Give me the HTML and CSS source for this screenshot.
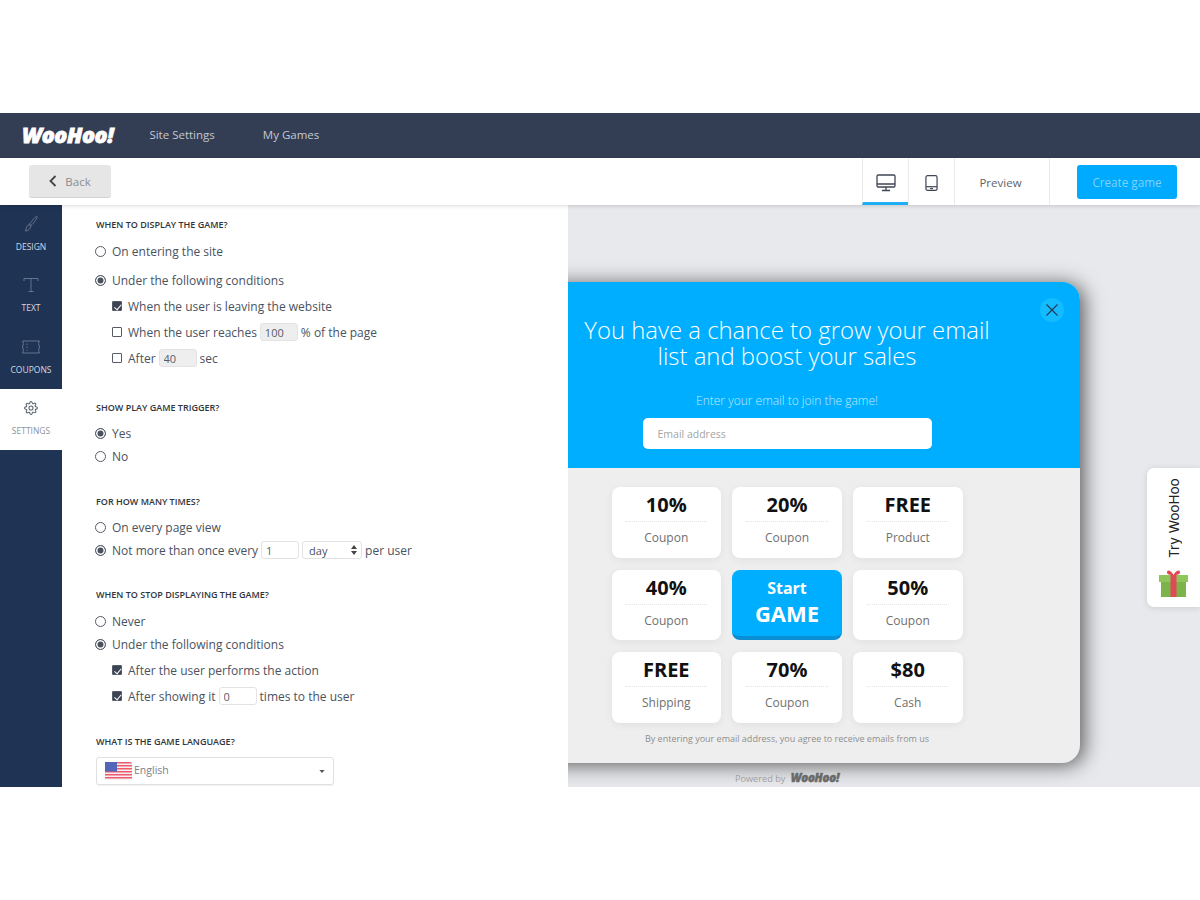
FILE: index.html
```html
<!DOCTYPE html>
<html lang="en">
<head>
    <meta charset="UTF-8">
    <meta name="viewport" content="width=device-width, initial-scale=1.0">
    <title>WooHoo - Game Settings</title>
    <link rel="stylesheet" href="styles.css">
</head>
<body>
    <div class="app">
        <nav class="navbar">
            <span class="logo">WooHoo!</span>
            <a class="nav-link">Site Settings</a>
            <a class="nav-link">My Games</a>
        </nav>

        <div class="toolbar">
            <button class="btn-back">
                <svg width="8" height="12" viewBox="0 0 8 12"><path d="M6.500 1 L1.500 6 L6.500 11" fill="none" stroke="#444" stroke-width="1.800"/></svg>
                Back
            </button>
            <div class="toolbar-right">
                <div class="device-tab active">
                    <svg width="20" height="18" viewBox="0 0 20 18" fill="none" stroke="#3f4653" stroke-width="1.300"><rect x="1" y="1" width="18" height="12" rx="1.200"/><path d="M1 10 H19 M10 13 V16.500 M6 16.500 H14"/></svg>
                </div>
                <div class="device-tab">
                    <svg width="13" height="18" viewBox="0 0 14 18" fill="none" stroke="#3f4653" stroke-width="1.300"><rect x="1" y="1" width="12" height="16" rx="1.800"/><path d="M1 13 H13"/><path d="M5.500 15 H8.500" stroke-width="1.400"/></svg>
                </div>
                <div class="preview-tab">Preview</div>
                <div class="create-wrap"><button class="btn-create">Create game</button></div>
            </div>
        </div>

        <div class="workspace">
            <aside class="sidebar">
                <div class="side-item">
                    <svg width="16" height="18" viewBox="0 0 16 18" fill="none" stroke="#66758f" stroke-width="1"><path d="M14 1.500 C15 2.500 11 8 8 10.500 L6.500 9 C9 6 13 .5 14 1.500 Z"/><path d="M6 9.500 L7.800 11.200 C7.500 14 5 16 2.200 16 C3.500 14.500 3 11 6 9.500 Z"/></svg>
                    <span>Design</span>
                </div>
                <div class="side-item">
                    <svg width="16" height="16" viewBox="0 0 16 16" fill="none" stroke="#66758f" stroke-width="1"><path d="M1 4 V1.500 H15 V4 M8 1.500 V14.500 M5.500 14.500 H10.500"/></svg>
                    <span>Text</span>
                </div>
                <div class="side-item">
                    <svg width="20" height="15" viewBox="0 0 20 15" fill="none" stroke="#66758f" stroke-width="1"><path d="M1.500 1.500 H18.500 L17.500 4 L18.500 7.500 L17.500 11 L18.500 13.500 H1.500 L2.500 11 L1.500 7.500 L2.500 4 Z"/><path d="M6 4 V11" stroke-dasharray="1.500 1.500"/></svg>
                    <span>Coupons</span>
                </div>
                <div class="side-item active">
                    <svg width="14" height="14" viewBox="0 0 24 24" fill="none" stroke="#5a6270" stroke-width="1.800"><circle cx="12" cy="12" r="3.500"/><path d="M19.400 15a1.650 1.650 0 0 0 .33 1.820l.06.06a2 2 0 1 1-2.830 2.830l-.06-.06a1.650 1.650 0 0 0-2.820 1.170V21a2 2 0 1 1-4 0v-.09a1.650 1.650 0 0 0-2.820-1.170l-.06.06a2 2 0 1 1-2.830-2.830l.06-.06a1.650 1.650 0 0 0-1.170-2.820H3a2 2 0 1 1 0-4h.09a1.650 1.650 0 0 0 1.170-2.820l-.06-.06a2 2 0 1 1 2.830-2.830l.06.06a1.650 1.650 0 0 0 2.820-1.170V3a2 2 0 1 1 4 0v.09a1.650 1.650 0 0 0 2.820 1.170l.06-.06a2 2 0 1 1 2.830 2.830l-.06.06a1.650 1.650 0 0 0 1.170 2.820H21a2 2 0 1 1 0 4h-.09a1.650 1.650 0 0 0-1.510 1z"/></svg>
                    <span>Settings</span>
                </div>
            </aside>

            <main class="panel">
                <section class="section">
                    <h4>When to display the game?</h4>
                    <label class="row"><input type="radio" name="display">On entering the site</label>
                    <label class="row row-loose"><input type="radio" name="display" checked>Under the following conditions</label>
                    <label class="row row-sub"><input type="checkbox" checked>When the user is leaving the website</label>
                    <label class="row row-sub"><input type="checkbox">When the user reaches<input class="num num-grey" type="text" value="100">% of the page</label>
                    <label class="row row-sub"><input type="checkbox">After<input class="num num-grey" type="text" value="40">sec</label>
                </section>

                <section class="section section-wide">
                    <h4>Show play game trigger?</h4>
                    <label class="row"><input type="radio" name="trigger" checked>Yes</label>
                    <label class="row"><input type="radio" name="trigger">No</label>
                </section>

                <section class="section">
                    <h4>For how many times?</h4>
                    <label class="row"><input type="radio" name="times">On every page view</label>
                    <label class="row"><input type="radio" name="times" checked>Not more than once every<input class="num" type="text" value="1"><span class="mini-select"><span>day</span><svg width="6" height="10" viewBox="0 0 6 10" fill="#444"><path d="M3 0 L6 4 H0 Z M3 10 L0 6 H6 Z"/></svg></span>per user</label>
                </section>

                <section class="section section-tight">
                    <h4>When to stop displaying the game?</h4>
                    <label class="row"><input type="radio" name="stop">Never</label>
                    <label class="row"><input type="radio" name="stop" checked>Under the following conditions</label>
                    <label class="row row-sub"><input type="checkbox" checked>After the user performs the action</label>
                    <label class="row row-sub"><input type="checkbox" checked>After showing it<input class="num" type="text" value="0">times to the user</label>
                </section>

                <section class="section">
                    <h4>What is the game language?</h4>
                    <div class="lang-select">
                        <svg width="27" height="18" viewBox="0 0 27 18"><rect width="27" height="18" rx="2" fill="#f4f0f2"/><path d="M0 2 a2 2 0 0 1 2-2 H25 a2 2 0 0 1 2 2 V1.500 H0 Z M0 3 H27 V4.500 H0 Z M0 6 H27 V7.500 H0 Z M0 9 H27 V10.500 H0 Z M0 12 H27 V13.500 H0 Z M0 15 H27 V16.500 H0 Z" fill="#ee5a6b"/><rect width="12" height="9.500" fill="#5566b8"/></svg>
                        <span class="lang-name">English</span>
                        <svg class="caret" width="6" height="3" viewBox="0 0 7 4" fill="#555"><path d="M0 0 H7 L3.500 4 Z"/></svg>
                    </div>
                </section>
            </main>

            <div class="preview">
                <div class="popup">
                    <div class="popup-head">
                        <button class="popup-close">
                            <svg width="12" height="12" viewBox="0 0 12 12"><path d="M.5 .5 L11.500 11.500 M11.500 .5 L.5 11.500" stroke="#20394f" stroke-width="1.100"/></svg>
                        </button>
                        <h2>You have a chance to grow your email<br>list and boost your sales</h2>
                        <p>Enter your email to join the game!</p>
                        <input class="email" type="text" placeholder="Email address">
                    </div>
                    <div class="popup-body">
                        <div class="grid">
                            <div class="card"><b>10%</b><span>Coupon</span></div>
                            <div class="card"><b>20%</b><span>Coupon</span></div>
                            <div class="card"><b>FREE</b><span>Product</span></div>
                            <div class="card"><b>40%</b><span>Coupon</span></div>
                            <div class="card-start"><span>Start</span><b>GAME</b></div>
                            <div class="card"><b>50%</b><span>Coupon</span></div>
                            <div class="card"><b>FREE</b><span>Shipping</span></div>
                            <div class="card"><b>70%</b><span>Coupon</span></div>
                            <div class="card"><b>$80</b><span>Cash</span></div>
                        </div>
                        <p class="terms">By entering your email address, you agree to receive emails from us</p>
                    </div>
                </div>
                <div class="powered">Powered by <span class="logo logo-small">WooHoo!</span></div>

                <div class="try-tab">
                    <span class="try-text">Try WooHoo</span>
                    <svg width="29" height="28" viewBox="0 0 29 28">
                        <path d="M14.500 6 C12 1 8 0 8 3.500 C8 5.500 11 6 14.500 6 C18 6 21 5.500 21 3.500 C21 0 17 1 14.500 6 Z" fill="#e2474f"/>
                        <rect x="0" y="6" width="29" height="7" fill="#8fc65a"/>
                        <rect x="2" y="13" width="25" height="15" fill="#7cb34a"/>
                        <rect x="11.500" y="6" width="6" height="22" fill="#df4a58"/>
                    </svg>
                </div>
            </div>
        </div>
    </div>
</body>
</html>
```

FILE: styles.css
```css
* {
    box-sizing: border-box;
}
body {
    margin: 0;
    background: white;
    font-family: "Open Sans", Arial, sans-serif;
    color: #4a5260;
}
.app {
    margin-top: 113px;
}

/* top bar */
.navbar {
    height: 45px;
    background: #333e54;
    display: flex;
    align-items: center;
    padding: 0 0 3px 22px;
}
.logo {
    font-family: "Open Sans", sans-serif;
    font-weight: 800;
    font-style: italic;
    font-size: 21.500px;
    letter-spacing: -0.4px;
    color: white;
    -webkit-text-stroke: 0.8px white;
}
.nav-link {
    font-size: 11.500px;
    color: #c3c8d1;
    margin-left: 36px;
}
.nav-link + .nav-link {
    margin-left: 48px;
}

/* toolbar */
.toolbar {
    position: relative;
    z-index: 3;
    height: 47px;
    background: white;
    display: flex;
    justify-content: space-between;
    box-shadow: 0 1px 4px rgba(0,0,0,0.15);
    padding-left: 29px;
}
.btn-back {
    margin-top: 7px;
    width: 82px;
    height: 33px;
    background: #e6e6e6;
    border: none;
    border-bottom: 1px solid #d2d2d2;
    border-radius: 3px;
    color: #8a8d92;
    font-family: inherit;
    font-size: 11.500px;
    display: flex;
    align-items: center;
    justify-content: center;
    gap: 8px;
}
.toolbar-right {
    display: flex;
}
.device-tab {
    width: 46px;
    display: flex;
    align-items: center;
    justify-content: center;
    padding-top: 6px;
    border-left: 1px solid #eaeaea;
    border-bottom: 3px solid transparent;
}
.device-tab.active {
    border-bottom-color: #1eaef5;
}
.preview-tab {
    width: 95px;
    display: flex;
    align-items: center;
    justify-content: center;
    padding: 2px 3px 0 0;
    border-left: 1px solid #eaeaea;
    font-size: 11.500px;
    color: #5f646c;
}
.create-wrap {
    width: 151px;
    border-left: 1px solid #eaeaea;
    padding: 7px 23px 0 27px;
}
.btn-create {
    width: 100%;
    height: 34px;
    background: #00aaff;
    border: none;
    border-radius: 3px;
    color: #7fd2fb;
    font-family: inherit;
    font-size: 11.700px;
}

/* main area */
.workspace {
    display: flex;
    height: 582px;
}
.sidebar {
    width: 62px;
    background: #1f3354;
    flex-shrink: 0;
}
.side-item {
    height: 61.330px;
    display: flex;
    flex-direction: column;
    align-items: center;
    padding-top: 10px;
    gap: 8px;
    font-size: 8.500px;
    text-transform: uppercase;
    color: #d3d9e3;
}
.side-item svg {
    height: 18px;
}
.side-item.active {
    background: white;
    color: #8d929a;
}

/* settings panel */
.panel {
    width: 506px;
    flex-shrink: 0;
    background: white;
    padding: 12px 0 0 34px;
    position: relative;
    z-index: 2;
}
.section {
    margin-top: 28px;
}
.section:first-child {
    margin-top: 0;
}
.section-wide {
    margin-top: 32px;
}
.section-tight {
    margin-top: 27px;
}
.section h4 {
    margin: 0;
    height: 16px;
    line-height: 16px;
    font-size: 9px;
    font-weight: 600;
    text-transform: uppercase;
    color: #30353d;
}
.row {
    display: flex;
    align-items: center;
    height: 20px;
    margin-top: 3px;
    font-size: 12px;
    white-space: nowrap;
}
.section h4 + .row {
    margin-top: 7px;
}
.section:first-child h4 + .row,
.section-tight h4 + .row {
    margin-top: 8px;
}
.row-loose {
    margin-top: 9px;
}
.row-sub {
    margin-top: 6px;
    padding-left: 16px;
}
input[type="radio"],
input[type="checkbox"] {
    appearance: none;
    flex-shrink: 0;
    background: white;
}
input[type="radio"] {
    width: 11px;
    height: 11px;
    border: 1px solid #555c68;
    border-radius: 50%;
    margin: 0 6px 0 -1px;
}
input[type="radio"]:checked {
    background: #4a5260;
    box-shadow: inset 0 0 0 1.500px white;
}
input[type="checkbox"] {
    position: relative;
    width: 10px;
    height: 10px;
    border: 1px solid #555c68;
    border-radius: 1px;
    margin: 0 6px 0 0;
}
input[type="checkbox"]:checked {
    background: #3c4454;
}
input[type="checkbox"]:checked::after {
    content: "";
    position: absolute;
    left: 2.500px;
    top: 0.500px;
    width: 3px;
    height: 5.500px;
    border: solid white;
    border-width: 0 1px 1px 0;
    transform: rotate(40deg);
}
.num {
    width: 38px;
    height: 18px;
    margin: 0 3px;
    padding: 0 4px;
    border: 1px solid #e3e3e3;
    border-radius: 3px;
    font-family: inherit;
    font-size: 11px;
    color: #555c68;
}
.num-grey {
    background: #eeeeee;
}
.mini-select {
    width: 60px;
    height: 18px;
    margin: 0 3px 0 0;
    padding: 0 4px 0 6px;
    border: 1px solid #e3e3e3;
    border-radius: 3px;
    font-size: 11px;
    display: flex;
    align-items: center;
    justify-content: space-between;
}
.lang-select {
    margin-top: 7px;
    width: 238px;
    height: 28px;
    border: 1px solid #e0e0e0;
    border-radius: 3px;
    box-shadow: 0 1px 1px rgba(0,0,0,0.06);
    display: flex;
    align-items: center;
    padding: 0 8px 0 8px;
}
.lang-name {
    flex: 1;
    margin-left: 2px;
    padding-bottom: 2px;
    font-size: 10.500px;
    color: #7b8089;
}

/* game preview */
.preview {
    flex: 1;
    position: relative;
    overflow: hidden;
    background: #e8e9ec;
    padding-top: 77px;
}
.popup {
    width: 586px;
    height: 481px;
    margin-left: -74px;
    border-radius: 18px;
    overflow: hidden;
    background: #eeeeee;
    box-shadow: 4px 2px 20px rgba(0,0,0,0.62);
}
.popup-head {
    position: relative;
    height: 186px;
    background: #00aeff;
    text-align: center;
    color: white;
    padding-top: 35px;
}
.popup-head h2 {
    margin: 0;
    font-weight: 300;
    font-size: 23.900px;
    line-height: 26px;
}
.popup-head p {
    margin: 24px 0 9px;
    font-size: 12px;
    line-height: 16px;
    font-weight: 300;
    color: #c3ebff;
}
.popup-close {
    position: absolute;
    top: 16px;
    right: 16px;
    width: 24px;
    height: 24px;
    border: none;
    border-radius: 50%;
    background: #15bbff;
    display: flex;
    align-items: center;
    justify-content: center;
    padding: 0;
}
.email {
    display: block;
    width: 289px;
    height: 31px;
    margin: 0 auto;
    padding: 0 15px;
    border: none;
    border-radius: 5px;
    font-family: inherit;
    font-size: 10.500px;
}
.email::placeholder {
    color: #a5a5a5;
}
.popup-body {
    padding-top: 19px;
}
.grid {
    width: 351px;
    margin: 0 auto;
    display: grid;
    grid-template-columns: repeat(3, 109.500px);
    grid-auto-rows: 70.500px;
    gap: 12px 11.250px;
}
.card {
    background: white;
    border-radius: 8px;
    box-shadow: 0 2px 8px rgba(0,0,0,0.06);
    text-align: center;
    display: flex;
    flex-direction: column;
    align-items: center;
}
.card b {
    width: 82px;
    height: 35px;
    line-height: 36px;
    font-size: 20px;
    font-weight: 700;
    color: #111;
    border-bottom: 1px dotted #e4e4e4;
}
.card span {
    margin-top: 7px;
    font-size: 12px;
    color: #707070;
}
.card-start {
    background: #00aeff;
    border-radius: 8px;
    border-bottom: 4px solid #0a8fd4;
    color: white;
    display: flex;
    flex-direction: column;
    align-items: center;
    padding-top: 6px;
}
.card-start span {
    font-size: 16px;
    font-weight: 700;
    line-height: 24px;
}
.card-start b {
    font-size: 22px;
    font-weight: 700;
    line-height: 26px;
}
.terms {
    margin: 8px 0 0;
    text-align: center;
    font-size: 9px;
    line-height: 16px;
    color: #8f8f8f;
}
.powered {
    width: 586px;
    margin: 7px 0 0 -74px;
    text-align: center;
    font-size: 9.200px;
    color: #a0a0a0;
}
.logo-small {
    font-size: 11.500px;
    color: #6a6a6a;
    -webkit-text-stroke: 0.5px #6a6a6a;
    letter-spacing: -0.3px;
    margin-left: 3px;
}
.try-tab {
    position: absolute;
    top: 263px;
    right: 0;
    width: 53px;
    height: 139px;
    background: white;
    border-radius: 7px 0 0 7px;
    box-shadow: 0 1px 6px rgba(0,0,0,0.12);
    display: flex;
    flex-direction: column;
    align-items: center;
    padding-top: 11px;
    gap: 11px;
}
.try-text {
    writing-mode: vertical-rl;
    transform: rotate(180deg);
    font-family: Inter, sans-serif;
    font-size: 13.500px;
    color: #222;
    height: 79px;
    white-space: nowrap;
}
```
